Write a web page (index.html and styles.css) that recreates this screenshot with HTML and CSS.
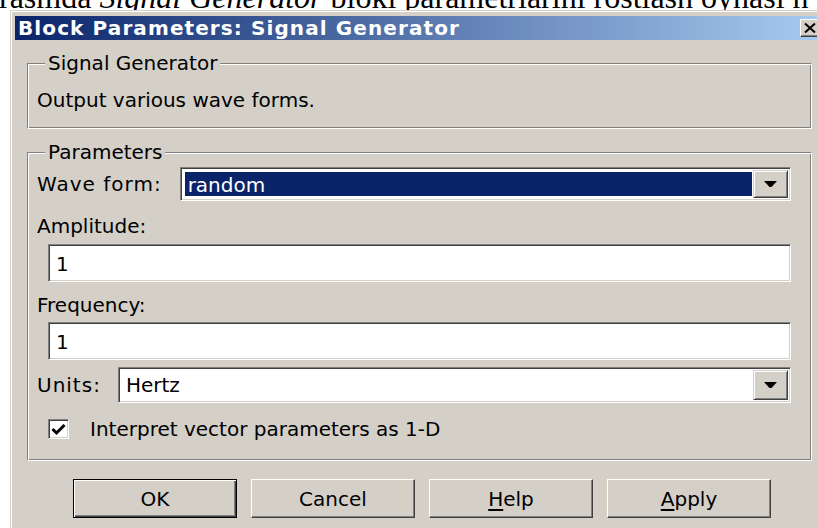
FILE: index.html
```html
<!DOCTYPE html>
<html lang="uz">
<head>
<meta charset="utf-8">
<title>Block Parameters: Signal Generator</title>
<link rel="stylesheet" href="styles.css">
</head>
<body>
<p class="caption"><span>rasmda <i>Signal Generator</i> bloki parametrlarini rostlash oynasi n</span></p>

<div class="dialog">
  <div class="titlebar">
    <span class="title">Block Parameters: Signal Generator</span>
    <button class="close" type="button" aria-label="Close">
      <svg width="12" height="10" viewBox="0 0 12 10"><path d="M1 0.5 L11 9.5 M11 0.5 L1 9.5" stroke="#000" stroke-width="2" fill="none"/></svg>
    </button>
  </div>

  <div class="content">
    <fieldset class="group group-desc">
      <legend>Signal Generator</legend>
      <p class="desc">Output various wave forms.</p>
    </fieldset>

    <fieldset class="group group-params">
      <legend>Parameters</legend>

      <div class="row row-wave">
        <span class="label">Wave form:</span>
        <div class="combo">
          <div class="combo-value selected"><span>random</span></div>
          <span class="combo-arrow"><svg width="13" height="7" viewBox="0 0 13 7"><polygon points="0,0 13,0 7.5,6 5.5,6" fill="#000"/></svg></span>
        </div>
      </div>

      <div class="label label-amp">Amplitude:</div>
      <div class="field field-amp">1</div>

      <div class="label label-freq">Frequency:</div>
      <div class="field field-freq">1</div>

      <div class="row row-units">
        <span class="label">Units:</span>
        <div class="combo">
          <div class="combo-value"><span>Hertz</span></div>
          <span class="combo-arrow"><svg width="13" height="7" viewBox="0 0 13 7"><polygon points="0,0 13,0 7.5,6 5.5,6" fill="#000"/></svg></span>
        </div>
      </div>

      <div class="row row-check">
        <span class="checkbox"><svg width="15" height="13" viewBox="0 0 15 13"><polyline points="1.5,6 5.5,10 13.5,2" stroke="#000" stroke-width="3" fill="none"/></svg></span>
        <span class="check-text">Interpret vector parameters as 1-D</span>
      </div>
    </fieldset>

    <div class="buttons">
      <button class="btn btn-default" type="button">OK</button>
      <button class="btn" type="button">Cancel</button>
      <button class="btn" type="button"><u>H</u>elp</button>
      <button class="btn" type="button"><u>A</u>pply</button>
    </div>
  </div>
</div>
</body>
</html>
```

FILE: styles.css
```css
html, body {
  margin: 0;
  padding: 0;
}

body {
  width: 817px;
  height: 528px;
  overflow: hidden;
  background: #fff;
  font-family: "DejaVu Sans", "Liberation Sans", sans-serif;
  font-size: 20px;
  color: #000;
}

/* running text of the page, only its lower edge shows above the window */
.caption {
  margin: 0;
  height: 10px;
  overflow: hidden;
  font: 32px/32px "Liberation Serif", serif;
  white-space: nowrap;
}
.caption span {
  display: block;
  margin-top: -19px;
  margin-left: -1px;
}

/* window frame */
.dialog {
  height: 518px;
  margin-left: 10px;
  background: #d4d0c8;
  border-top: 1px solid #d4d0c8;
  border-left: 1px solid #d4d0c8;
  box-shadow: inset 1px 1px 0 #fff;
  padding: 5px 0 0 4px;
  box-sizing: border-box;
}

.titlebar {
  height: 24px;
  display: flex;
  align-items: center;
  justify-content: space-between;
  overflow: hidden;
  background: linear-gradient(to right, #0a246a, #a6caf0);
  color: #fff;
}
.title {
  padding-left: 3px;
  font-weight: bold;
  font-size: 20px;
  letter-spacing: 1.1px;
  white-space: nowrap;
}
.close {
  flex: none;
  width: 21px;
  height: 18px;
  margin-right: -4px;
  padding: 0 0 0 3px;
  display: flex;
  align-items: center;
  justify-content: flex-start;
  background: #d4d0c8;
  border: 1px solid;
  border-color: #fff #404040 #404040 #fff;
  box-shadow: inset -1px -1px 0 #808080;
  box-sizing: border-box;
}

.content {
  padding: 0 5px 0 12px;
}

/* etched group boxes */
.group {
  margin: 11px 0 0;
  min-inline-size: 0;
  border: 1px solid;
  border-color: #808080 #fff #fff #808080;
  box-shadow: inset 1px 1px 0 #fff, inset -1px -1px 0 #808080;
}
.group legend {
  margin-left: 8px;
  padding: 0 3px;
  line-height: 24px;
  background: #d4d0c8;
}
.group-desc {
  padding: 13px 20px 16px 9px;
}
.desc {
  margin: 0;
  line-height: 24px;
}
.group-params {
  padding: 0 20px 19px 9px;
}

.label {
  line-height: 24px;
  white-space: nowrap;
}

.row {
  display: flex;
  align-items: center;
}

.row-wave { margin-top: 3px; gap: 18px; }
.row-wave .label,
.row-units .label { letter-spacing: 1px; }
.label-amp { margin-top: 13px; }
.field-amp { margin-top: 6px; }
.label-freq { margin-top: 11px; }
.field-freq { margin-top: 5px; }
.row-units { margin-top: 7px; gap: 17px; }
.row-units .combo { height: 36px; }
.row-check { margin-top: 14px; height: 24px; }

/* sunken edit boxes */
.field,
.combo,
.checkbox {
  background: #fff;
  border: 1px solid;
  border-color: #808080 #fff #fff #808080;
  box-shadow: inset 1px 1px 0 #404040, inset -1px -1px 0 #d4d0c8;
  box-sizing: border-box;
}

.field {
  height: 38px;
  margin-left: 11px;
  padding: 2px 7px;
  line-height: 34px;
}

.combo {
  flex: 1;
  height: 34px;
  display: flex;
  padding: 2px;
}
.combo-value {
  flex: 1;
  margin: 2px 1px 2px 2px;
  padding-left: 3px;
  line-height: 26px;
  white-space: nowrap;
}
.combo-value.selected {
  background: #0a246a;
  color: #fff;
}
.combo-arrow {
  flex: none;
  width: 35px;
  display: flex;
  align-items: center;
  justify-content: center;
  background: #d4d0c8;
  border: 1px solid;
  border-color: #d4d0c8 #404040 #404040 #d4d0c8;
  box-shadow: inset 1px 1px 0 #fff, inset -1px -1px 0 #808080;
  box-sizing: border-box;
}

.checkbox {
  flex: none;
  width: 21px;
  height: 20px;
  margin-left: 11px;
  display: flex;
  align-items: center;
  justify-content: center;
}
.check-text {
  margin-left: 21px;
  white-space: nowrap;
}

/* dialog buttons */
.buttons {
  display: flex;
  gap: 14px;
  margin-top: 18px;
  padding-left: 46px;
}
.btn {
  width: 164px;
  height: 39px;
  padding: 0;
  font: inherit;
  color: #000;
  background: #d4d0c8;
  border: 1px solid;
  border-color: #fff #404040 #404040 #fff;
  box-shadow: inset -1px -1px 0 #808080;
}
.btn-default {
  border-color: #000;
  box-shadow: inset 1px 1px 0 #fff, inset -1px -1px 0 #404040, inset -2px -2px 0 #808080;
}
.btn u {
  text-underline-offset: 3px;
}
```
